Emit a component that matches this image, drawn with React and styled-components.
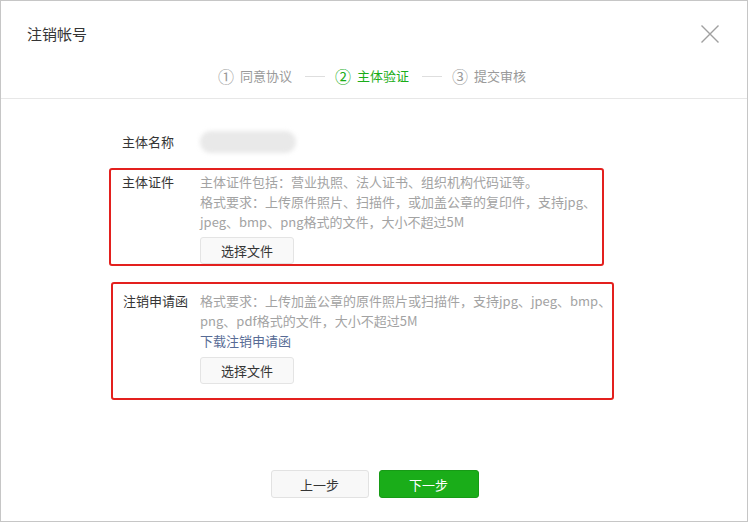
import React from 'react';
import styled, { createGlobalStyle } from 'styled-components';

const GlobalStyle = createGlobalStyle`
    html, body {
        margin: 0;
        padding: 0;
        background: #fff;
    }
    body {
        font-family: "Noto Sans CJK SC", "Noto Sans", sans-serif;
        color: #353535;
    }
`;

const Frame = styled.div`
    box-sizing: border-box;
    width: 748px;
    height: 522px;
    border: 1px solid #c6c6c6;
    display: flex;
    flex-direction: column;
    background: #fff;
`;

const Header = styled.div`
    box-sizing: border-box;
    height: 98px;
    border-bottom: 1px solid #e7e7e7;
    display: flex;
    flex-direction: column;
`;

const TitleBar = styled.div`
    height: 65px;
    padding: 0 27px 0 26px;
    display: flex;
    align-items: center;
    justify-content: space-between;
`;

const Title = styled.div`
    font-size: 15px;
    color: #353535;
`;

const CloseButton = styled.button`
    border: none;
    background: none;
    padding: 0;
    width: 20px;
    height: 18px;
    display: flex;
    cursor: pointer;
`;

const Steps = styled.div`
    height: 20px;
    display: flex;
    align-items: center;
    justify-content: center;
    padding-right: 4px;
`;

const Step = styled.div`
    display: flex;
    align-items: center;
    font-size: 13px;
    line-height: 20px;
    color: ${p => (p.$active ? '#1aad19' : '#9a9a9a')};

    .num {
        font-size: 16px;
        margin-right: 6px;
    }
`;

const StepLine = styled.div`
    width: 20px;
    height: 1px;
    background: #dedede;
    margin: 0 10px 0 13px;
`;

const Form = styled.div`
    padding-top: 32px;
    display: flex;
    flex-direction: column;
`;

const NameRow = styled.div`
    display: flex;
    align-items: center;
    height: 22px;
    padding-left: 121px;
`;

const Label = styled.div`
    width: ${p => p.$width}px;
    flex: none;
    font-size: 13px;
    line-height: 20px;
    color: #353535;
`;

const BlurName = styled.div`
    width: 96px;
    height: 22px;
    border-radius: 11px;
    background: #e9e9e9;
    filter: blur(2px);
`;

const Row = styled.div`
    box-sizing: border-box;
    display: flex;
    align-items: flex-start;
    width: ${p => p.$width}px;
    margin: ${p => p.$top}px 0 0 ${p => p.$left}px;
    padding: ${p => p.$pad};
    border: 2px solid #e3201e;
    border-radius: 3px;
`;

const Content = styled.div`
    width: 414px;
    flex: none;
    font-size: 13px;
    line-height: 20px;
    color: #a3a3a3;
`;

const Link = styled.a`
    display: block;
    color: #576b95;
    text-decoration: none;
    cursor: pointer;
`;

const FileButton = styled.button`
    display: block;
    box-sizing: border-box;
    width: 94px;
    height: 27px;
    margin-top: ${p => p.$top}px;
    border: 1px solid #e4e4e4;
    border-radius: 3px;
    background: #f9f9f9;
    font-family: inherit;
    font-size: 13px;
    color: #353535;
    cursor: pointer;
`;

const Footer = styled.div`
    margin-top: auto;
    padding: 0 0 23px 1px;
    display: flex;
    justify-content: center;
    gap: 10px;
`;

const ActionButton = styled.button`
    box-sizing: border-box;
    width: ${p => (p.$primary ? 100 : 98)}px;
    height: 28px;
    border-radius: 3px;
    border: 1px solid ${p => (p.$primary ? '#179b16' : '#e2e2e2')};
    background: ${p => (p.$primary ? '#1aad19' : '#f8f8f8')};
    color: ${p => (p.$primary ? '#fff' : '#353535')};
    font-family: inherit;
    font-size: 13px;
    cursor: pointer;
`;

const steps = [
    { num: '①', text: '同意协议' },
    { num: '②', text: '主体验证', active: true },
    { num: '③', text: '提交审核' },
];

const App = () => {
    return (
        <>
            <GlobalStyle />
            <Frame>
                <Header>
                    <TitleBar>
                        <Title>注销帐号</Title>
                        <CloseButton aria-label="关闭">
                            <svg width="20" height="18" viewBox="0 0 20 18">
                                <path d="M1.5 0.5 L18.5 17.5 M18.5 0.5 L1.5 17.5" stroke="#a0a0a0" strokeWidth="1.4" fill="none" />
                            </svg>
                        </CloseButton>
                    </TitleBar>
                    <Steps>
                        {steps.map((s, i) => (
                            <React.Fragment key={s.num}>
                                {i > 0 && <StepLine />}
                                <Step $active={s.active}>
                                    <span className="num">{s.num}</span>
                                    {s.text}
                                </Step>
                            </React.Fragment>
                        ))}
                    </Steps>
                </Header>

                <Form>
                    <NameRow>
                        <Label $width={78}>主体名称</Label>
                        <BlurName />
                    </NameRow>

                    <Row $width={495} $top={15} $left={108} $pad="2px 0 0 11px">
                        <Label $width={78}>主体证件</Label>
                        <Content>
                            主体证件包括：营业执照、法人证书、组织机构代码证等。
                            <br />
                            格式要求：上传原件照片、扫描件，或加盖公章的复印件，支持jpg、jpeg、bmp、png格式的文件，大小不超过5M
                            <FileButton $top={5}>选择文件</FileButton>
                        </Content>
                    </Row>

                    <Row $width={503} $top={16} $left={110} $pad="7px 0 14px 10px">
                        <Label $width={77}>注销申请函</Label>
                        <Content>
                            格式要求：上传加盖公章的原件照片或扫描件，支持jpg、jpeg、bmp、png、pdf格式的文件，大小不超过5M
                            <Link>下载注销申请函</Link>
                            <FileButton $top={6}>选择文件</FileButton>
                        </Content>
                    </Row>
                </Form>

                <Footer>
                    <ActionButton>上一步</ActionButton>
                    <ActionButton $primary>下一步</ActionButton>
                </Footer>
            </Frame>
        </>
    );
};

export default App;
